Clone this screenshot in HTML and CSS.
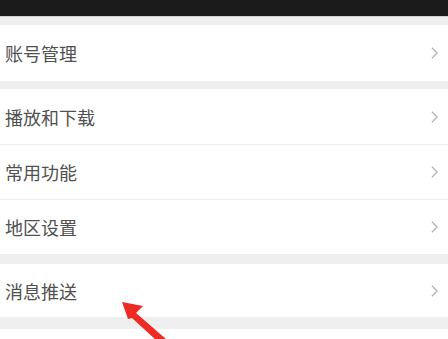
FILE: index.html
```html
<!DOCTYPE html>
<html lang="zh">
<head>
<meta charset="utf-8">
<link rel="stylesheet" href="styles.css">
</head>
<body>
<div class="screen">
  <div class="topbar"></div>
  <div class="gap gap-top"></div>
  <div class="group">
    <div class="row tall"><span class="label">账号管理</span><svg class="chev" viewBox="0 0 8 14"><path d="M1 1l6 6-6 6"/></svg></div>
  </div>
  <div class="gap"></div>
  <div class="group">
    <div class="row"><span class="label">播放和下载</span><svg class="chev" viewBox="0 0 8 14"><path d="M1 1l6 6-6 6"/></svg></div>
    <div class="row"><span class="label">常用功能</span><svg class="chev" viewBox="0 0 8 14"><path d="M1 1l6 6-6 6"/></svg></div>
    <div class="row"><span class="label">地区设置</span><svg class="chev" viewBox="0 0 8 14"><path d="M1 1l6 6-6 6"/></svg></div>
  </div>
  <div class="gap gap-mid"></div>
  <div class="group">
    <div class="row short"><span class="label">消息推送</span><svg class="chev" viewBox="0 0 8 14"><path d="M1 1l6 6-6 6"/></svg></div>
  </div>
  <div class="gap gap-bottom"></div>
  <svg class="arrow" viewBox="0 0 80 50" width="80" height="50">
    <polygon points="0,0 21,4 14,11 52,44 47,50 10,16 6,17" fill="#ee2a24"/>
  </svg>
</div>
</body>
</html>
```
FILE: styles.css
```css
html, body {
  margin: 0;
  padding: 0;
  background: #ffffff;
}
.screen {
  position: relative;
  width: 448px;
  height: 339px;
  overflow: hidden;
  display: flex;
  flex-direction: column;
  font-family: "Noto Sans CJK SC", "Noto Sans", sans-serif;
  background: #ffffff;
}
.topbar {
  height: 17px;
  background: #1b1b1b;
  border-bottom: 1px solid #cfcfcf;
  box-sizing: border-box;
}
.gap {
  height: 8px;
  background: #efefef;
}
.gap-top {
  height: 8px;
}
.gap-mid {
  height: 10px;
}
.gap-bottom {
  height: 12px;
}
.group {
  background: #ffffff;
  display: flex;
  flex-direction: column;
}
.row {
  height: 55px;
  display: flex;
  align-items: center;
  justify-content: space-between;
  padding: 0 10px 0 5px;
  box-sizing: border-box;
  border-top: 1px solid #ececec;
}
.row:first-child {
  border-top: none;
}
.row.tall {
  height: 56px;
}
.row.short {
  height: 53px;
}
.label {
  font-size: 18px;
  color: #505050;
  line-height: 1;
}
.chev {
  width: 7px;
  height: 12px;
  fill: none;
  stroke: #b5b5b5;
  stroke-width: 1.6;
}
.arrow {
  position: absolute;
  left: 122px;
  top: 302px;
}
```
